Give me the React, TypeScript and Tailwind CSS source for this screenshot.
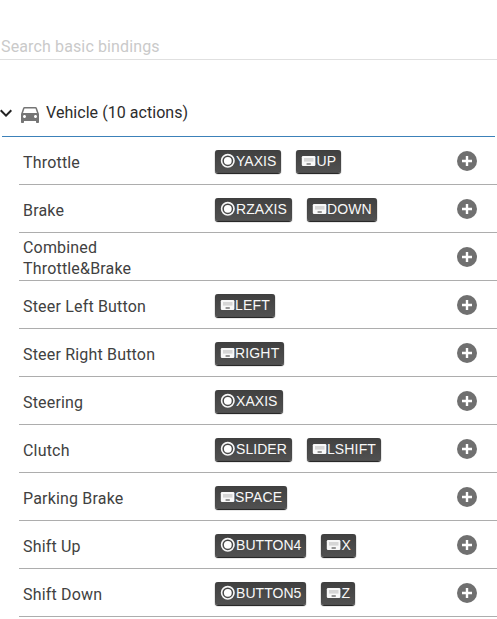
import React from 'react';

type Binding = { kind: 'axis' | 'key'; label: string };

const actions: { name: string; bindings: Binding[] }[] = [
  { name: 'Throttle', bindings: [{ kind: 'axis', label: 'YAXIS' }, { kind: 'key', label: 'UP' }] },
  { name: 'Brake', bindings: [{ kind: 'axis', label: 'RZAXIS' }, { kind: 'key', label: 'DOWN' }] },
  { name: 'Combined Throttle&Brake', bindings: [] },
  { name: 'Steer Left Button', bindings: [{ kind: 'key', label: 'LEFT' }] },
  { name: 'Steer Right Button', bindings: [{ kind: 'key', label: 'RIGHT' }] },
  { name: 'Steering', bindings: [{ kind: 'axis', label: 'XAXIS' }] },
  { name: 'Clutch', bindings: [{ kind: 'axis', label: 'SLIDER' }, { kind: 'key', label: 'LSHIFT' }] },
  { name: 'Parking Brake', bindings: [{ kind: 'key', label: 'SPACE' }] },
  { name: 'Shift Up', bindings: [{ kind: 'axis', label: 'BUTTON4' }, { kind: 'key', label: 'X' }] },
  { name: 'Shift Down', bindings: [{ kind: 'axis', label: 'BUTTON5' }, { kind: 'key', label: 'Z' }] },
];

function AxisIcon() {
  return (
    <svg className="size-4 shrink-0" viewBox="0 0 16 16">
      <circle cx="7.8" cy="7.8" r="6.2" fill="none" stroke="#f6f6f6" strokeWidth="1.6" />
      <circle cx="7.8" cy="7.8" r="3.9" fill="#fff" />
    </svg>
  );
}

function KeyIcon() {
  return (
    <svg className="h-4 w-[15px] shrink-0" viewBox="0 0 15 16">
      <rect x="0.8" y="3" width="13.6" height="10" rx="1.2" fill="#f8f8f8" />
      <path d="M3 5h9.5v3.6H3z" fill="#d6d6d6" />
      <path d="M5.6 11h4.2" stroke="#333" strokeWidth="1" />
    </svg>
  );
}

function Badge({ kind, label }: Binding) {
  return (
    <span className="flex h-[23px] items-center rounded-[3px] bg-gradient-to-b from-[#404040] to-[#515151] px-[5px] pb-px font-['Liberation_Sans',Arial,sans-serif] text-[14px] leading-[22px] text-[#f8f8f8] shadow-[inset_0_0_1px_#333,0_1px_1px_#111]">
      {kind === 'axis' ? <AxisIcon /> : <KeyIcon />}
      <span className={kind === 'axis' ? 'tracking-[0.05px]' : 'tracking-[0.16px]'}>{label}</span>
    </span>
  );
}

export default function App() {
  return (
    <main className="h-[619px] w-full overflow-hidden bg-white font-[Roboto,sans-serif] text-[16px] text-[#414141]">
      <div className="flex h-[60px] items-end border-b border-[#e0e0e0] pb-0.5 pl-px">
        <input
          className="w-full leading-5 tracking-[0.13px] outline-none placeholder:text-[#cacaca]"
          placeholder="Search basic bindings"
        />
      </div>

      <div className="mx-0.5 mt-[30px] flex h-[47px] items-center border-b border-[#3c81b9]">
        <svg className="-ml-2 size-6 shrink-0" viewBox="0 0 24 24">
          <path d="M7.41 8.59 12 13.17l4.59-4.58L18 10l-6 6-6-6z" fill="#222" />
        </svg>
        <svg className="mt-0.5 size-6 shrink-0" viewBox="0 0 24 24">
          <path
            d="M18.92 6.01C18.72 5.42 18.16 5 17.5 5h-11c-.66 0-1.21.42-1.42 1.01L3 12v8c0 .55.45 1 1 1h1c.55 0 1-.45 1-1v-1h12v1c0 .55.45 1 1 1h1c.55 0 1-.45 1-1v-8l-2.08-5.99zM6.5 16c-.83 0-1.5-.67-1.5-1.5S5.67 13 6.5 13s1.5.67 1.5 1.5S7.33 16 6.5 16zm11 0c-.83 0-1.5-.67-1.5-1.5s.67-1.5 1.5-1.5 1.5.67 1.5 1.5-.67 1.5-1.5 1.5zM5 11l1.5-4.5h11L19 11H5z"
            fill="#757575"
          />
        </svg>
        <h2 className="ml-1 tracking-[0.05px] text-[#2c2c2c]">Vehicle (10 actions)</h2>
      </div>

      <ul className="ml-[19px]">
        {actions.map(({ name, bindings }) => (
          <li key={name} className="flex h-12 items-center border-b border-[#adadad] pr-[18px] pl-1">
            <span className="mt-[3px] w-36 leading-[21px] tracking-[0.18px]">{name}</span>
            <div className="mt-px ml-12 flex flex-1 gap-[15px]">
              {bindings.map((b) => (
                <Badge key={b.label} {...b} />
              ))}
            </div>
            <svg className="size-6 shrink-0" viewBox="0 0 24 24">
              <circle cx="12" cy="12" r="10" fill="#707070" />
              <path d="M12 7v10M7 12h10" stroke="#fff" strokeWidth="2.4" />
            </svg>
          </li>
        ))}
      </ul>
    </main>
  );
}
